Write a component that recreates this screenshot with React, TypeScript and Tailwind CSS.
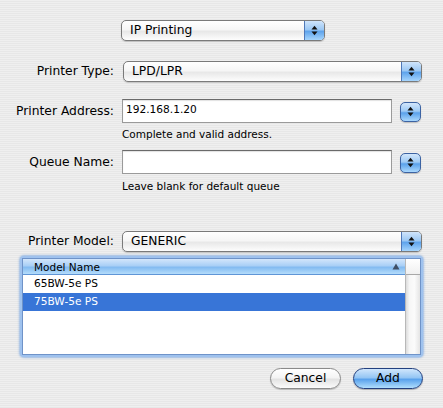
import React from 'react'

function Arrows() {
  return (
    <svg width="7" height="11" viewBox="0 0 7 11" aria-hidden="true">
      <polygon points="0.5,4.5 3.5,0.8 6.5,4.5" fill="#111" />
      <polygon points="0.5,6.5 3.5,10.2 6.5,6.5" fill="#111" />
    </svg>
  )
}

function Popup({ label, className }: { label: string; className: string }) {
  return (
    <div
      className={`flex h-[21px] items-stretch overflow-hidden rounded-[5px] border border-[#7a7a7a] bg-[linear-gradient(to_bottom,#ffffff_0%,#f6f6f6_45%,#e8e8e8_55%,#fdfdfd_100%)] shadow-[0_1px_1px_rgba(0,0,0,0.18)] ${className}`}
    >
      <span className="flex-1 pl-[8px] text-[12.3px] leading-[19px] text-black">{label}</span>
      <span className="flex w-[20px] items-center justify-center border-l border-[#4f78b8] bg-[linear-gradient(to_bottom,#cfe4fb_0%,#9cc8f4_45%,#5fa4ec_55%,#a6d5fd_100%)]">
        <Arrows />
      </span>
    </div>
  )
}

function Stepper() {
  return (
    <div className="flex h-[20px] w-[21px] items-center justify-center rounded-[5px] border border-[#3c63a3] bg-[linear-gradient(to_bottom,#d2e6fb_0%,#9ecaf5_45%,#5aa1eb_55%,#aad8fd_100%)] shadow-[0_1px_1px_rgba(0,0,0,0.2)]">
      <Arrows />
    </div>
  )
}

function TextField({ value }: { value: string }) {
  return (
    <div className="h-[24px] w-[270px] border border-[#9a9a9a] border-t-[#6a6a6a] bg-white pl-[3px] pt-[1px] text-[10.6px] leading-[16px] text-black shadow-[inset_0_1px_1px_rgba(0,0,0,0.12)]">
      {value}
    </div>
  )
}

export default function App() {
  const models = ['65BW-5e PS', '75BW-5e PS']
  const selected = 1

  return (
    <div className="flex h-[408px] w-[443px] flex-col bg-[repeating-linear-gradient(to_bottom,#efefef_0px,#efefef_1px,#e7e7e7_1px,#e7e7e7_2px)] pt-[20px] font-['DejaVu_Sans',sans-serif] text-black">
      {/* Connection kind */}
      <Popup label="IP Printing" className="ml-[121px] w-[204px]" />

      {/* Printer type */}
      <div className="mt-[20px] flex items-center">
        <span className="w-[114px] text-right text-[12.3px]">Printer Type:</span>
        <Popup label="LPD/LPR" className="ml-[9px] w-[299px]" />
      </div>

      {/* Address */}
      <div className="mt-[17px] flex items-center">
        <span className="w-[114px] text-right text-[12.3px]">Printer Address:</span>
        <div className="ml-[8px]">
          <TextField value="192.168.1.20" />
        </div>
        <div className="ml-[8px] mt-[1px]">
          <Stepper />
        </div>
      </div>
      <p className="ml-[122px] mt-[4px] text-[10.5px] leading-[14px]">Complete and valid address.</p>

      {/* Queue */}
      <div className="mt-[9px] flex items-center">
        <span className="w-[114px] text-right text-[12.3px]">Queue Name:</span>
        <div className="ml-[8px]">
          <TextField value="" />
        </div>
        <div className="ml-[8px] mt-[1px]">
          <Stepper />
        </div>
      </div>
      <p className="ml-[122px] mt-[5px] text-[10.5px] leading-[14px]">Leave blank for default queue</p>

      {/* Model */}
      <div className="mt-[38px] flex items-center">
        <span className="w-[114px] text-right text-[12.3px]">Printer Model:</span>
        <Popup label="GENERIC" className="ml-[8px] w-[300px]" />
      </div>

      {/* Model list */}
      <div className="ml-[20px] mt-[4px] w-[403px] rounded-[4px] bg-[#9fc2ee] p-[2px] shadow-[0_0_2px_1px_rgba(110,160,225,0.6)]">
        <div className="flex h-[97px] border border-[#6f93c8] bg-white">
          <div className="flex flex-1 flex-col">
            <div className="flex h-[16px] items-center justify-between border-b border-[#5f95d6] bg-[linear-gradient(to_bottom,#d3e6fb_0%,#a9cff6_45%,#83bbf1_55%,#b4dcfb_100%)] pl-[11px] pr-[5px]">
              <span className="text-[10.5px] leading-[14px]">Model Name</span>
              <svg width="8" height="7" viewBox="0 0 8 7" aria-hidden="true">
                <polygon points="0.5,6.5 4,0.5 7.5,6.5" fill="#3f4f66" />
              </svg>
            </div>
            {models.map((m, i) => (
              <div
                key={m}
                className={
                  i === selected
                    ? 'flex h-[18px] items-center bg-[#3875d7] pl-[11px] text-[10.6px] text-white'
                    : 'flex h-[18px] items-center pl-[11px] text-[10.6px] text-black'
                }
              >
                {m}
              </div>
            ))}
          </div>
          <div className="flex w-[15px] flex-col border-l border-[#b8b8b8]">
            <div className="h-[16px] border-b border-[#a8a8a8] bg-[linear-gradient(to_bottom,#ffffff,#f0f0f0)]" />
            <div className="flex-1 bg-[linear-gradient(to_right,#dcdcdc,#f6f6f6_25%,#fbfbfb_60%,#e4e4e4)]" />
          </div>
        </div>
      </div>

      {/* Actions */}
      <div className="mt-[11px] flex justify-end gap-[12px] pr-[20px]">
        <button className="h-[21px] w-[71px] rounded-full border border-[#8a8a8a] bg-[linear-gradient(to_bottom,#ffffff_0%,#f4f4f4_45%,#e3e3e3_55%,#fbfbfb_100%)] text-[12.3px] leading-[19px] shadow-[0_1px_1px_rgba(0,0,0,0.2)]">
          Cancel
        </button>
        <button className="h-[21px] w-[70px] rounded-full border border-[#23407f] bg-[linear-gradient(to_bottom,#d0e6fc_0%,#95c6f4_45%,#5aa2ec_55%,#b0defd_100%)] text-[12.3px] leading-[19px] shadow-[0_1px_1px_rgba(0,0,0,0.25)]">
          Add
        </button>
      </div>
    </div>
  )
}
